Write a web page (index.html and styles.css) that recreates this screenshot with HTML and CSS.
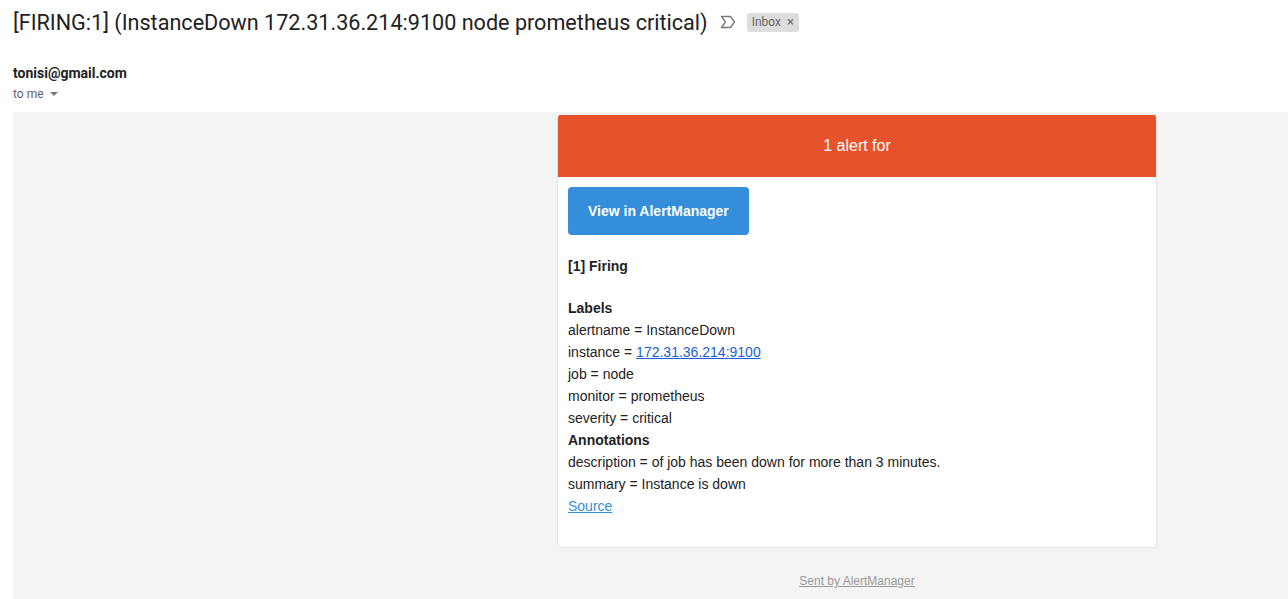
FILE: index.html
```html
<!DOCTYPE html>
<html>
<head>
<meta charset="utf-8">
<link rel="stylesheet" href="styles.css">
</head>
<body>
<div class="page">
  <div class="subject">
    <h1 class="subject-text">[FIRING:1] (InstanceDown 172.31.36.214:9100 node prometheus critical)</h1>
    <svg class="imp" width="16" height="14" viewBox="0 0 16 14"><path d="M1.5 1.5 H10.5 L14.5 7 L10.5 12.5 H1.5 L5.5 7 Z" fill="none" stroke="#777" stroke-width="1.3" stroke-linejoin="round"/></svg>
    <span class="chip">Inbox <span class="chip-x">×</span></span>
  </div>
  <div class="sender">
    <div class="from">tonisi@gmail.com</div>
    <div class="to">to me <span class="caret"></span></div>
  </div>
  <div class="mailbody">
    <div class="wrap">
      <div class="card">
        <div class="alert-head">1 alert for</div>
        <div class="content">
          <a class="btn" href="#">View in AlertManager</a>
          <div class="firing">[1] Firing</div>
          <div class="details">
            <div class="strong">Labels</div>
            <div>alertname = InstanceDown</div>
            <div>instance = <a class="link" href="#">172.31.36.214:9100</a></div>
            <div>job = node</div>
            <div>monitor = prometheus</div>
            <div>severity = critical</div>
            <div class="strong">Annotations</div>
            <div>description = of job has been down for more than 3 minutes.</div>
            <div>summary = Instance is down</div>
            <div><a class="source" href="#">Source</a></div>
          </div>
        </div>
      </div>
      <div class="footer"><a href="#">Sent by AlertManager</a></div>
    </div>
  </div>
</div>
</body>
</html>
```
FILE: styles.css
```css
html, body { margin: 0; padding: 0; background: #fff; overflow: hidden; }
.page { padding-left: 13px; font-family: Roboto, "Liberation Sans", Arial, sans-serif; }
.subject { display: flex; align-items: center; height: 44px; }
.subject-text { margin: 0; font-weight: 400; font-size: 21.6px; color: #222; font-family: Roboto, "Liberation Sans", sans-serif; }
.imp { margin-left: 12px; }
.chip { margin-left: 11px; background: #ddd; color: #666; font-size: 12px; padding: 1px 5px 2px 5px; border-radius: 3px; line-height: 15px; }
.chip-x { font-size: 13px; color: #666; margin-left: 3px; }
.sender { padding-top: 20px; height: 48px; }
.from { font-weight: 700; font-size: 14px; color: #222; line-height: 18px; }
.to { font-size: 12px; color: #5f6368; line-height: 20px; margin-top: 2px; display: flex; align-items: center; }
.caret { display: inline-block; margin-left: 6px; width: 0; height: 0; border-left: 4px solid transparent; border-right: 4px solid transparent; border-top: 4px solid #777; }
.mailbody { background: #f4f4f4; padding-top: 3px; padding-bottom: 12px; font-family: "Liberation Sans", Arial, Helvetica, sans-serif; }
.wrap { width: 600px; margin-left: 544px; }
.card { background: #fff; border: 1px solid #e6e6e6; border-top: none; border-radius: 3px; overflow: hidden; }
.alert-head { background: #E6522C; color: #fff; font-size: 16px; text-align: center; padding: 20px; line-height: 22px; }
.content { padding: 10px 10px 30px 10px; font-size: 14px; color: #222; line-height: 22px; }
.btn { display: inline-block; background: #348eda; color: #fff; font-weight: 700; text-decoration: none; padding: 12px 20px; line-height: 24px; border-radius: 4px; }
.firing { font-weight: 700; margin-top: 20px; margin-bottom: 20px; }
.strong { font-weight: 700; }
.link { color: #1a5fd6; }
.source { color: #348eda; }
.footer { text-align: center; font-size: 12px; padding-top: 25px; line-height: 16px; }
.footer a { color: #999; }
```
